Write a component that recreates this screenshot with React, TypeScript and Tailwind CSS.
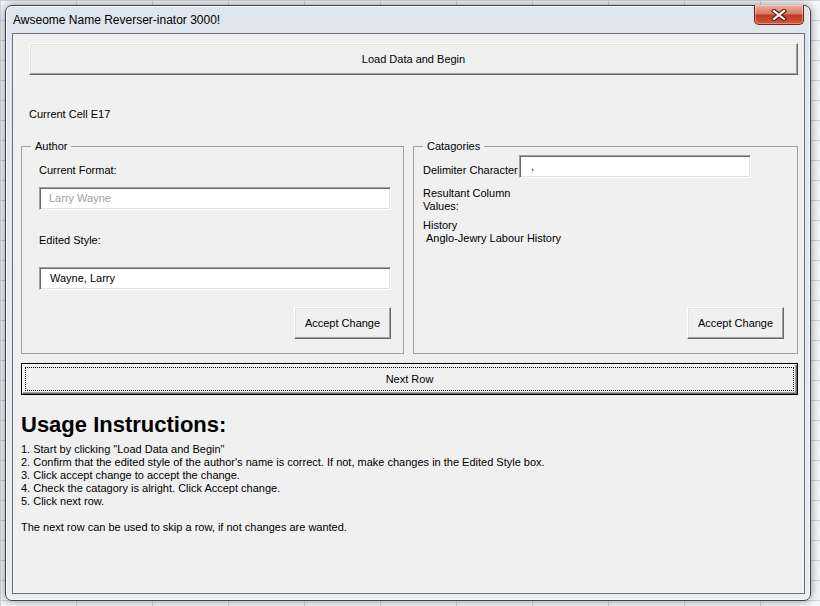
import { FC, ReactNode } from 'react'

type Props = { children?: ReactNode; className?: string }

const Button: FC<Props> = ({ children, className }) => (
  <div
    className={`flex items-center justify-center border border-t-white border-l-white border-r-[#696969] border-b-[#696969] bg-[#f0f0f0] shadow-[inset_-1px_-1px_0_#a0a0a0,inset_1px_1px_0_#e3e3e3] ${className ?? ''}`}
  >
    {children}
  </div>
)

const TextBox: FC<Props> = ({ children, className }) => (
  <div
    className={`flex h-[23px] items-center border border-t-[#a0a0a0] border-l-[#a0a0a0] border-r-white border-b-white bg-white shadow-[inset_1px_1px_0_#696969,inset_-1px_-1px_0_#e3e3e3] ${className ?? ''}`}
  >
    {children}
  </div>
)

const Frame: FC<Props & { title: string }> = ({ title, children, className }) => (
  <div className={`relative flex h-[208px] flex-col border border-[#a0a0a0] pb-[14px] ${className ?? ''}`}>
    <span className="absolute -top-[7px] left-[9px] bg-[#f0f0f0] px-[4px] leading-[13px]">{title}</span>
    {children}
  </div>
)

const CloseButton = () => (
  <div className="-mt-[1px] mr-[6px] flex h-[20px] w-[50px] items-center justify-center self-start rounded-b-[5px] border border-t-0 border-[#6e2519] bg-[linear-gradient(#eab2a4,#d8786a_45%,#c13a20_55%,#d4583c)] shadow-[inset_0_0_0_1px_rgba(255,255,255,0.35)]">
    <svg width="16" height="12" viewBox="0 0 16 12">
      <path d="M3 2 L13 10 M13 2 L3 10" stroke="#4a1a12" strokeWidth="4.2" strokeLinecap="square" />
      <path d="M3 2 L13 10 M13 2 L3 10" stroke="#ffffff" strokeWidth="2.2" strokeLinecap="square" />
    </svg>
  </div>
)

const steps = [
  '1. Start by clicking "Load Data and Begin"',
  "2. Confirm that the edited style of the author's name is correct. If not, make changes in the Edited Style box.",
  '3. Click accept change to accept the change.',
  '4. Check the catagory is alright. Click Accept change.',
  '5. Click next row.',
]

export default function App() {
  return (
    <div className="h-[606px] w-[820px] overflow-hidden bg-[#f5f6f8] bg-[linear-gradient(#cfd4db_1px,transparent_1px),linear-gradient(90deg,#cfd4db_1px,transparent_1px)] bg-[size:76px_20px] pl-[5px] pt-[5px] font-['Liberation_Sans',Arial,sans-serif] text-[11px] leading-[13px] text-black">
      <div className="flex h-[596px] w-[806px] flex-col rounded-[7px] border border-[#3a4352] bg-[linear-gradient(#dfe5ec,#e9edf2)] shadow-[0_0_8px_rgba(0,0,0,0.45),inset_0_0_0_1px_rgba(255,255,255,0.85)]">
        <div className="flex h-[27px] items-center justify-between pl-[7px]">
          <span className="pt-[1px] text-[12px] leading-[14px] text-black">Awseome Name Reverser-inator 3000!</span>
          <CloseButton />
        </div>

        <div className="ml-[6px] mr-[5px] flex h-[561px] flex-col border border-[#6b717a] bg-[#f0f0f0] pl-[8px] pr-[6px] pt-[9px]">
          <Button className="ml-[8px] h-[32px]">Load Data and Begin</Button>

          <div className="ml-[8px] mt-[33px]">Current Cell E17</div>

          <div className="mt-[25px] flex gap-[9px]">
            <Frame title="Author" className="w-[383px] pl-[17px] pr-[12px]">
              <div className="mt-[17px]">Current Format:</div>
              <TextBox className="mt-[10px] pl-[9px] text-[#a0a0a0]">Larry Wayne</TextBox>
              <div className="mt-[24px]">Edited Style:</div>
              <TextBox className="mt-[20px] pl-[10px]">Wayne, Larry</TextBox>
              <Button className="mt-auto h-[32px] w-[97px] self-end">Accept Change</Button>
            </Frame>

            <Frame title="Catagories" className="flex-1 pl-[9px] pr-[13px]">
              <div className="mt-[8px] flex items-start">
                <div className="mt-[9px] w-[96px] whitespace-nowrap">Delimiter Character</div>
                <TextBox className="w-[232px] pl-[11px]">,</TextBox>
              </div>
              <div className="mt-[9px]">
                Resultant Column
                <br />
                Values:
              </div>
              <div className="mt-[6px]">History</div>
              <div className="pl-[3px]">Anglo-Jewry Labour History</div>
              <Button className="mt-auto h-[32px] w-[97px] self-end">Accept Change</Button>
            </Frame>
          </div>

          <div className="mt-[9px] h-[32px] border border-black">
            <div className="h-full border border-t-white border-l-white border-r-[#696969] border-b-[#696969] p-[2px] shadow-[inset_-1px_-1px_0_#a0a0a0]">
              <div className="flex h-full items-center justify-center border border-dotted border-black">Next Row</div>
            </div>
          </div>

          <h1 className="mt-[17px] text-[22px] font-bold leading-[26px]">Usage Instructions:</h1>

          <div className="mt-[5px]">
            {steps.map((s) => (
              <div key={s}>{s}</div>
            ))}
          </div>

          <div className="mt-[13px]">The next row can be used to skip a row, if not changes are wanted.</div>
        </div>
      </div>
    </div>
  )
}
